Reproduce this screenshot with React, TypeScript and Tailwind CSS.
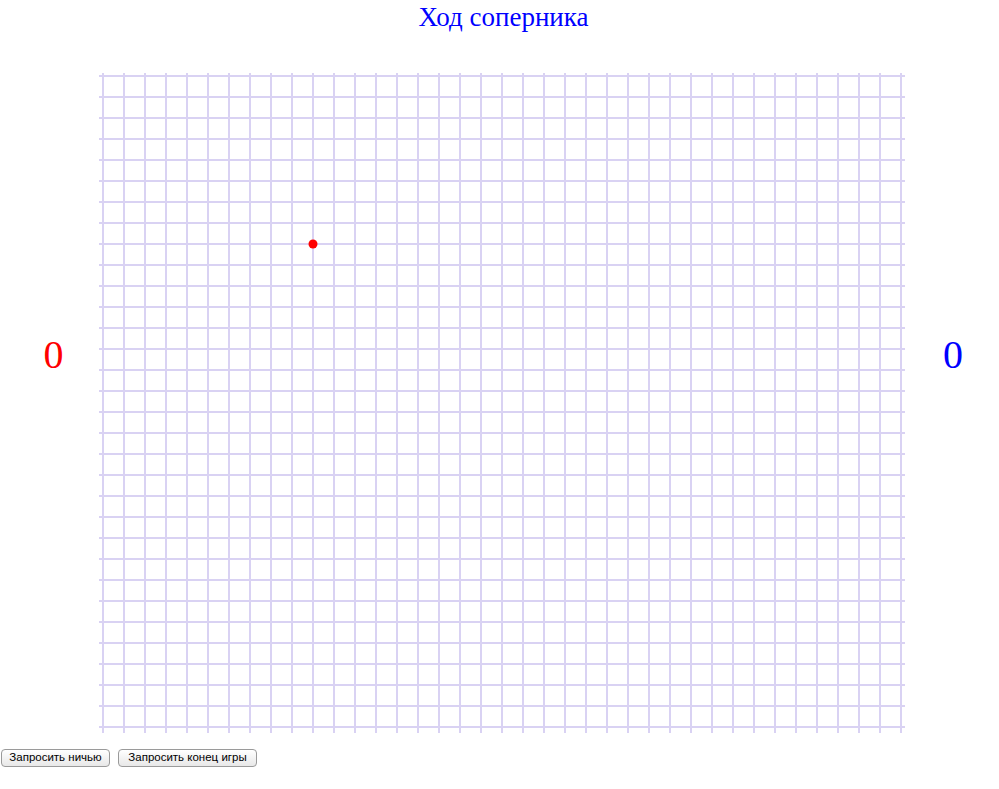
const COLS = 39;
const ROWS = 32;
const STEP = 21;

function Board() {
  const w = 806;
  const h = 660;
  return (
    <svg width={w} height={h} viewBox={`0 0 ${w} ${h}`} className="block shrink-0">
      {Array.from({ length: COLS }).map((_, i) => (
        <rect key={"v" + i} x={3 + STEP * i} y={0} width={2} height={h} fill="#d9d2f3" />
      ))}
      {Array.from({ length: ROWS }).map((_, j) => (
        <rect key={"h" + j} x={0} y={2 + STEP * j} width={w} height={2} fill="#d9d2f3" />
      ))}
      <circle cx={4 + STEP * 10} cy={3 + STEP * 8} r={4.5} fill="#ff0000" />
    </svg>
  );
}

export default function App() {
  return (
    <div className="w-[999px] h-[789px] bg-white overflow-hidden [font-family:'Liberation_Serif',serif]">
      <div className="h-[73px] pt-[2px] pl-[8px] text-center text-[27px] leading-[30px] text-[#0000ff]">
        Ход соперника
      </div>

      <div className="flex">
        <div className="w-[99px] pt-[260px] pl-[8px] text-center text-[40px] leading-[44px] text-[#ff0000]">0</div>
        <Board />
        <div className="flex-1 pt-[260px] pl-[2px] text-center text-[40px] leading-[44px] text-[#0000ff]">0</div>
      </div>

      <div className="flex gap-[8px] pl-[1px] pt-[16px] [font-family:'Liberation_Sans',Arial,sans-serif]">
        <button className="h-[18px] w-[109px] rounded-[4px] border border-[#9a9a9a] bg-gradient-to-b from-white to-[#e8e8e8] text-[11.5px] leading-none text-black">
          Запросить ничью
        </button>
        <button className="h-[18px] w-[139px] rounded-[4px] border border-[#9a9a9a] bg-gradient-to-b from-white to-[#e8e8e8] text-[11.5px] leading-none text-black">
          Запросить конец игры
        </button>
      </div>
    </div>
  );
}
